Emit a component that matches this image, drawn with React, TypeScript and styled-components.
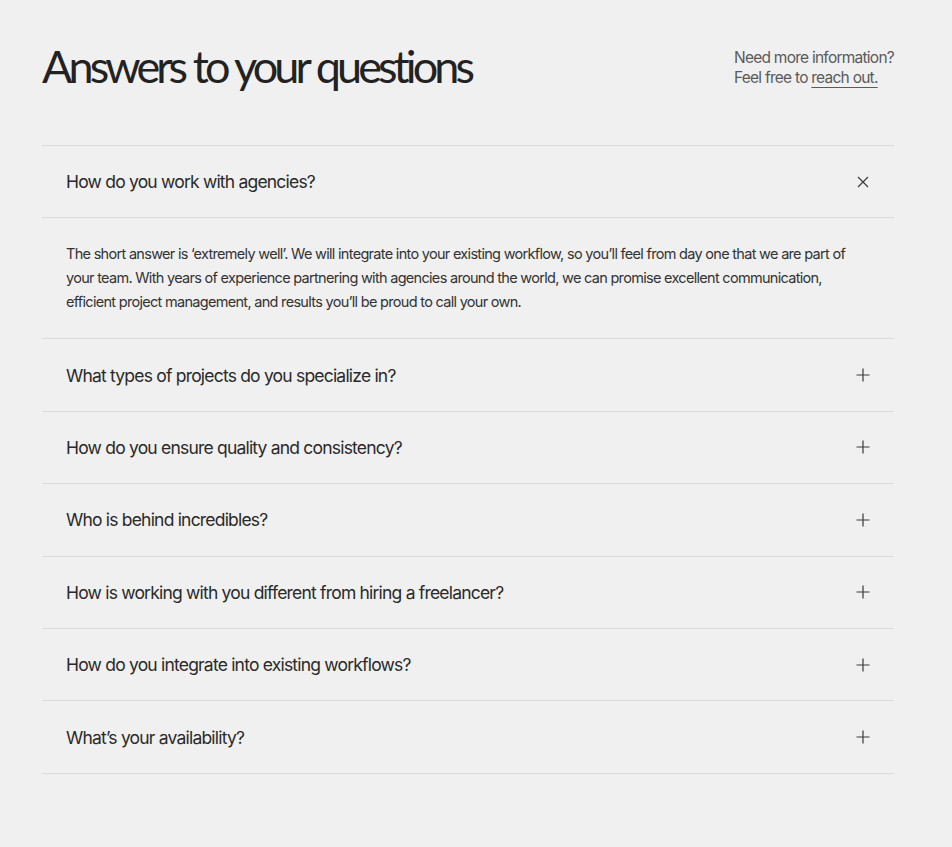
import React, { useState } from 'react'
import styled, { createGlobalStyle } from 'styled-components'

interface IFaqItem {
  question: string,
  answer?: string
}

const faqItems: Array<IFaqItem> = [
  {
    question: 'How do you work with agencies?',
    answer: 'The short answer is ‘extremely well’. We will integrate into your existing workflow, so you’ll feel from day one that we are part of your team. With years of experience partnering with agencies around the world, we can promise excellent communication, efficient project management, and results you’ll be proud to call your own.'
  },
  { question: 'What types of projects do you specialize in?' },
  { question: 'How do you ensure quality and consistency?' },
  { question: 'Who is behind incredibles?' },
  { question: 'How is working with you different from hiring a freelancer?' },
  { question: 'How do you integrate into existing workflows?' },
  { question: 'What’s your availability?' }
]

const GlobalStyle = createGlobalStyle`
  html, body {
    margin: 0;
    background: #f0f0f0;
  }
  body {
    font-family: Inter, "Liberation Sans", sans-serif;
    color: #2a2a2a;
  }
`;

const Page = styled.section`
  padding: 38px 58px 74px 42px;
`;

const Header = styled.div`
  display: flex;
  justify-content: space-between;
  align-items: flex-start;
  margin-bottom: 51px;
`;

const Title = styled.h2`
  margin: 0;
  font-family: Lato, sans-serif;
  font-weight: 400;
  font-size: 45px;
  line-height: 56px;
  letter-spacing: -3.9px;
  word-spacing: 1px;
  color: #222;
`;

const Aside = styled.p`
  margin: 10px 0 0;
  font-size: 15.5px;
  line-height: 20px;
  letter-spacing: -0.75px;
  color: #5a5a5a;
  a {
    color: inherit;
    text-decoration: underline;
    text-underline-offset: 4px;
    text-decoration-thickness: 1px;
  }
`;

const List = styled.div`
  border-top: 1px solid #dadada;
`;

const Item = styled.div`
  border-bottom: 1px solid #dadada;
`;

const Trigger = styled.button`
  all: unset;
  box-sizing: border-box;
  display: flex;
  width: 100%;
  align-items: center;
  justify-content: space-between;
  height: 71.4px;
  padding: 0 24px;
  cursor: pointer;
  font-size: 17.5px;
  letter-spacing: -0.8px;
  color: #2a2a2a;
`;

const Panel = styled.div`
  border-top: 1px solid #dadada;
  padding: 24px 24px 24px;
  font-size: 14.5px;
  line-height: 24px;
  letter-spacing: -0.7px;
  color: #333;
`;

const Icon = ({ open }: { open: boolean }) => (
  <svg width="14" height="14" viewBox="0 0 14 14" fill="none" stroke="#3a3a3a" strokeWidth="1.2">
    {open
      ? <path d="M2 2L12 12M12 2L2 12" />
      : <path d="M7 0.5V13.5M0.5 7H13.5" />}
  </svg>
)

const App = () => {
  const [openIndex, setOpenIndex] = useState<number | null>(0)

  return (
    <Page>
      <GlobalStyle />
      <Header>
        <Title>Answers to your questions</Title>
        <Aside>
          Need more information?<br />
          Feel free to <a href="#contact">reach out.</a>
        </Aside>
      </Header>
      <List>
        {faqItems.map((item, i) => {
          const open = openIndex === i
          return (
            <Item key={item.question}>
              <Trigger onClick={() => setOpenIndex(open ? null : i)}>
                {item.question}
                <Icon open={open} />
              </Trigger>
              {open && item.answer && <Panel>{item.answer}</Panel>}
            </Item>
          )
        })}
      </List>
    </Page>
  )
}

export default App
